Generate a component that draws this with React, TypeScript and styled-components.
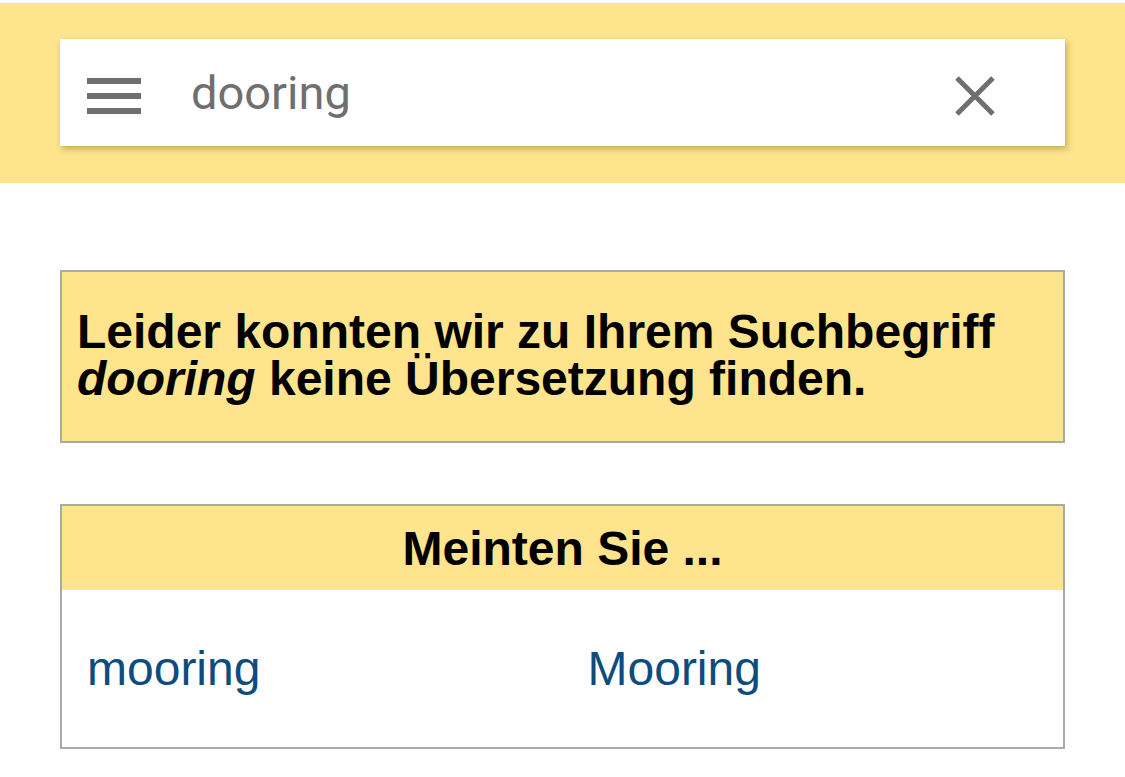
import React from "react";
import styled, { createGlobalStyle } from "styled-components";

const YELLOW = "#fee48c";
const GREY_BORDER = "#a9a9a9";
const ICON = "#6f6f6f";

const GlobalStyle = createGlobalStyle`
  html, body {
    margin: 0;
    padding: 0;
    background: #ffffff;
  }
  body {
    font-family: "Liberation Sans", Arial, sans-serif;
    color: #000;
  }
  * { box-sizing: border-box; }
`;

const Page = styled.div`
  padding-top: 3px;
  display: flex;
  flex-direction: column;
`;

const Header = styled.header`
  background: ${YELLOW};
  padding: 36px 60px 37px;
`;

const SearchCard = styled.div`
  height: 107px;
  background: #ffffff;
  display: flex;
  align-items: center;
  padding: 0 69px 0 27px;
  box-shadow: 2px 3px 6px rgba(90, 70, 0, 0.35);
`;

const MenuButton = styled.button`
  width: 54px;
  height: 36px;
  margin-top: 7px;
  padding: 0;
  border: none;
  background: transparent;
  display: flex;
  flex-direction: column;
  justify-content: space-between;
  cursor: pointer;
`;

const MenuLine = styled.span`
  display: block;
  width: 54px;
  height: 6px;
  background: ${ICON};
`;

const QueryText = styled.div`
  flex: 1;
  margin-left: 50px;
  font-family: Roboto, "Liberation Sans", sans-serif;
  font-size: 47px;
  color: ${ICON};
`;

const ClearButton = styled.button`
  width: 42px;
  height: 42px;
  margin-top: 7px;
  padding: 0;
  border: none;
  background: transparent;
  display: flex;
  cursor: pointer;
`;

const NoticeBox = styled.div`
  margin: 87px 60px 0;
  border: 2px solid ${GREY_BORDER};
  background: ${YELLOW};
  padding: 36px 15px 39px;
  font-size: 48px;
  font-weight: bold;
  line-height: 47px;
`;

const SuggestBox = styled.section`
  margin: 61px 60px 28px;
  border: 2px solid ${GREY_BORDER};
  background: #ffffff;
`;

const SuggestHeader = styled.h2`
  margin: 0;
  height: 84px;
  background: ${YELLOW};
  display: flex;
  align-items: center;
  justify-content: center;
  font-size: 48px;
  font-weight: bold;
`;

const SuggestGrid = styled.div`
  display: grid;
  grid-template-columns: 1fr 1fr;
  height: 157px;
  align-items: center;
`;

const SuggestCell = styled.div`
  padding: 0 25px;
`;

const SuggestLink = styled.a`
  font-size: 48px;
  color: #0e4c7e;
  text-decoration: none;
`;

export default function App() {
  return (
    <>
      <GlobalStyle />
      <Page>
        <Header>
          <SearchCard>
            <MenuButton aria-label="Menü">
              <MenuLine />
              <MenuLine />
              <MenuLine />
            </MenuButton>
            <QueryText>dooring</QueryText>
            <ClearButton aria-label="Löschen">
              <svg width="42" height="42" viewBox="0 0 42 42">
                <path d="M3 3 L39 39 M39 3 L3 39" stroke={ICON} strokeWidth="5" fill="none" />
              </svg>
            </ClearButton>
          </SearchCard>
        </Header>

        <NoticeBox>
          Leider konnten wir zu Ihrem Suchbegriff <i>dooring</i> keine Übersetzung finden.
        </NoticeBox>

        <SuggestBox>
          <SuggestHeader>Meinten Sie ...</SuggestHeader>
          <SuggestGrid>
            <SuggestCell>
              <SuggestLink href="#">mooring</SuggestLink>
            </SuggestCell>
            <SuggestCell>
              <SuggestLink href="#">Mooring</SuggestLink>
            </SuggestCell>
          </SuggestGrid>
        </SuggestBox>
      </Page>
    </>
  );
}
